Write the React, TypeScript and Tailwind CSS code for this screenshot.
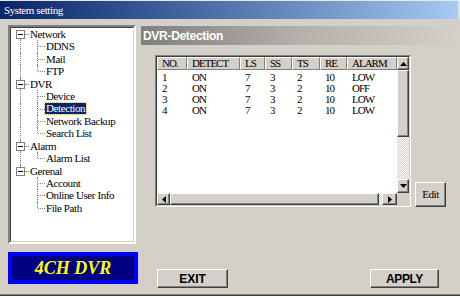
import React from "react";

const serif = "font-['Liberation_Serif',serif]";
const sans = "font-['Liberation_Sans',Arial,sans-serif]";
const raised =
  "bg-[#d4d0c8] border border-t-white border-l-white border-r-[#404040] border-b-[#404040] shadow-[inset_-1px_-1px_0_#808080]";
const checker =
  "bg-[repeating-conic-gradient(#d4d0c8_0_25%,#ffffff_0_50%)] bg-size-[2px_2px]";

type Node = { label: string; kids: string[] };

const tree: Node[] = [
  { label: "Network", kids: ["DDNS", "Mail", "FTP"] },
  { label: "DVR", kids: ["Device", "Detection", "Network Backup", "Search List"] },
  { label: "Alarm", kids: ["Alarm List"] },
  { label: "Gerenal", kids: ["Account", "Online User Info", "File Path"] },
];

const cols = [
  { name: "NO.", w: "w-[30px]" },
  { name: "DETECT", w: "w-[53px]" },
  { name: "LS", w: "w-[25px]" },
  { name: "SS", w: "w-[27px]" },
  { name: "TS", w: "w-[28px]" },
  { name: "RE", w: "w-[27px]" },
  { name: "ALARM", w: "w-[50px]" },
];

const rows = [
  ["1", "ON", "7", "3", "2", "10", "LOW"],
  ["2", "ON", "7", "3", "2", "10", "OFF"],
  ["3", "ON", "7", "3", "2", "10", "LOW"],
  ["4", "ON", "7", "3", "2", "10", "LOW"],
];

function Arrow({ dir }: { dir: "up" | "down" | "left" | "right" }) {
  const pts = {
    up: "0,4 7,4 3.5,0",
    down: "0,0 7,0 3.5,4",
    left: "4,0 4,7 0,3.5",
    right: "0,0 0,7 4,3.5",
  }[dir];
  const vert = dir === "up" || dir === "down";
  return (
    <svg width={vert ? 7 : 4} height={vert ? 4 : 7} viewBox={vert ? "0 0 7 4" : "0 0 4 7"}>
      <polygon points={pts} fill="#000" />
    </svg>
  );
}

function RootRow({ label, first, last }: { label: string; first: boolean; last: boolean }) {
  return (
    <div className="relative h-[12.43px] flex items-center">
      <span
        className={`absolute left-[9px] border-l border-dotted border-[#808080] ${
          first ? "top-[6px] bottom-0" : last ? "top-0 h-[6px]" : "top-0 bottom-0"
        }`}
      />
      <span className="absolute left-[14px] w-[4px] top-[6px] border-t border-dotted border-[#808080]" />
      <span className="absolute left-[5px] top-[2px] w-[9px] h-[9px] border border-[#808080] bg-white flex items-center justify-center">
        <span className="w-[5px] h-px bg-black" />
      </span>
      <span className="pl-[19px] leading-[12.43px] tracking-[-0.4px]">{label}</span>
    </div>
  );
}

function ChildRow({
  label,
  lastKid,
  rootLine,
  selected,
}: {
  label: string;
  lastKid: boolean;
  rootLine: boolean;
  selected: boolean;
}) {
  return (
    <div className="relative h-[12.43px] flex items-center">
      {rootLine && <span className="absolute left-[9px] top-0 bottom-0 border-l border-dotted border-[#808080]" />}
      <span
        className={`absolute left-[26px] border-l border-dotted border-[#808080] ${
          lastKid ? "top-0 h-[6px]" : "top-0 bottom-0"
        }`}
      />
      <span className="absolute left-[27px] w-[7px] top-[6px] border-t border-dotted border-[#808080]" />
      <span
        className={`ml-[34px] px-px leading-[11px] tracking-[-0.4px] ${
          selected ? "bg-[#0a246a] text-white outline outline-dotted outline-[#d0c060]" : ""
        }`}
      >
        {label}
      </span>
    </div>
  );
}

function Tree() {
  return (
    <div className={`h-[219px] w-[128px] bg-white border-2 border-t-[#808080] border-l-[#808080] border-r-white border-b-white ${serif} text-[11px] text-black`}>
      <div className="border border-t-[#404040] border-l-[#404040] border-r-[#d4d0c8] border-b-[#d4d0c8] h-full">
        {tree.map((n, i) => (
          <div key={n.label}>
            <RootRow label={n.label} first={i === 0} last={i === tree.length - 1} />
            {n.kids.map((k, j) => (
              <ChildRow
                key={k}
                label={k}
                lastKid={j === n.kids.length - 1}
                rootLine={i !== tree.length - 1}
                selected={k === "Detection"}
              />
            ))}
          </div>
        ))}
      </div>
    </div>
  );
}

function ListView() {
  return (
    <div className="w-[256px] h-[152px] border border-t-[#808080] border-l-[#808080] border-r-white border-b-white">
      <div className="h-full border border-t-[#404040] border-l-[#404040] border-r-[#d4d0c8] border-b-[#d4d0c8] bg-white flex flex-col">
        <div className="flex h-[136px]">
          <div className={`w-[240px] ${serif} text-[11px] text-black`}>
            <div className="flex h-[13px]">
              {cols.map((c) => (
                <div
                  key={c.name}
                  className={`${c.w} bg-[#d4d0c8] border border-t-white border-l-white border-r-[#808080] border-b-[#808080] pl-[4px] leading-[11px] tracking-[-1px] overflow-hidden whitespace-nowrap`}
                >
                  {c.name}
                </div>
              ))}
            </div>
            <div className="pt-[2px]">
              {rows.map((r, i) => (
                <div key={i} className="flex h-[11px]">
                  {r.map((v, j) => (
                    <div key={j} className={`${cols[j].w} pl-[5px] leading-[11px] tracking-[-1px]`}>
                      {v}
                    </div>
                  ))}
                </div>
              ))}
            </div>
          </div>
          <div className="w-[12px] flex flex-col">
            <div className={`h-[13px] ${raised} flex items-center justify-center`}>
              <Arrow dir="up" />
            </div>
            <div className={`h-[67px] ${raised}`} />
            <div className={`flex-1 ${checker}`} />
            <div className={`h-[14px] ${raised} flex items-center justify-center`}>
              <Arrow dir="down" />
            </div>
          </div>
        </div>
        <div className="flex h-[12px]">
          <div className={`w-[13px] ${raised} flex items-center justify-center`}>
            <Arrow dir="left" />
          </div>
          <div className={`w-[209px] ${raised}`} />
          <div className={`w-[3px] ${checker}`} />
          <div className={`w-[15px] ${raised} flex items-center justify-center`}>
            <Arrow dir="right" />
          </div>
          <div className="flex-1 bg-[#d4d0c8]" />
        </div>
      </div>
    </div>
  );
}

export default function App() {
  return (
    <div className="w-[460px] h-[298px] bg-[#d4d0c8] flex flex-col overflow-hidden">
      <div className="h-px bg-[#e8e8e8]" />
      <div className="flex h-[18px]">
        <div className={`w-[458px] bg-linear-to-r from-[#0a246a] to-[#a6caf0] flex items-center pl-[4px] text-white text-[11px] tracking-[-0.4px] ${serif}`}>
          System setting
        </div>
        <div className="flex-1 bg-[#e4e2dc]" />
      </div>
      <div className="flex flex-1 pl-[8px]">
        <div className="w-[130px] pt-[6px] flex flex-col">
          <Tree />
          <div className={`mt-[8px] h-[32px] w-[130px] bg-[#000080] border-4 border-[#0000ff] flex items-center justify-center text-[#ffff00] text-[18px] font-bold italic ${serif}`}>
            4CH DVR
          </div>
        </div>
        <div className="ml-[3px] w-[315px] pt-[7px] flex flex-col">
          <div className={`h-[19px] bg-linear-to-r from-[#808080] via-[#b4b0aa] to-[#d4d0c8] flex items-center pl-[2px] text-white text-[12px] font-bold tracking-[-0.3px] ${sans}`}>
            DVR-Detection
          </div>
          <div className="flex items-end mt-[10px] ml-[14px]">
            <ListView />
            <button className={`ml-[4px] w-[31px] h-[25px] ${raised} text-[11px] tracking-[-0.4px] text-black ${serif}`}>
              Edit
            </button>
          </div>
          <div className="flex justify-between mt-[62px] ml-[16px] mr-[17px]">
            <button className={`w-[71px] h-[19px] ${raised} text-[12px] font-bold text-black ${sans}`}>EXIT</button>
            <button className={`w-[69px] h-[19px] ${raised} text-[12px] font-bold tracking-[-0.4px] text-black ${sans}`}>APPLY</button>
          </div>
        </div>
      </div>
      <div className="h-px bg-[#808080]" />
      <div className="h-px bg-[#404040]" />
      <div className="h-[2px] bg-white" />
    </div>
  );
}
